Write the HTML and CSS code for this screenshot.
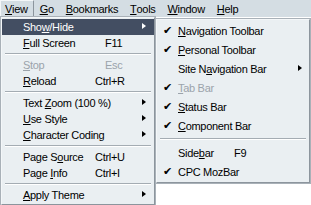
FILE: index.html
```html
<!DOCTYPE html>
<html>
<head>
<meta charset="utf-8">
<link rel="stylesheet" href="styles.css">
</head>
<body>
<div class="menubar">
  <span class="mb-item active"><u>V</u>iew</span>
  <span class="mb-item"><u>G</u>o</span>
  <span class="mb-item"><u>B</u>ookmarks</span>
  <span class="mb-item"><u>T</u>ools</span>
  <span class="mb-item"><u>W</u>indow</span>
  <span class="mb-item"><u>H</u>elp</span>
</div>
<div class="menus">
  <div class="menu menu-main">
    <div class="item hl"><span class="label">Sho<u>w</u>/Hide</span><span class="arrow"></span></div>
    <div class="item"><span class="label"><u>F</u>ull Screen</span><span class="accel short">F11</span></div>
    <div class="sep"></div>
    <div class="item disabled"><span class="label"><u>S</u>top</span><span class="accel short">Esc</span></div>
    <div class="item"><span class="label"><u>R</u>eload</span><span class="accel">Ctrl+R</span></div>
    <div class="sep"></div>
    <div class="item"><span class="label">Text <u>Z</u>oom (100 %)</span><span class="arrow"></span></div>
    <div class="item"><span class="label"><u>U</u>se Style</span><span class="arrow"></span></div>
    <div class="item"><span class="label"><u>C</u>haracter Coding</span><span class="arrow"></span></div>
    <div class="sep"></div>
    <div class="item"><span class="label">Page S<u>o</u>urce</span><span class="accel">Ctrl+U</span></div>
    <div class="item"><span class="label">Page <u>I</u>nfo</span><span class="accel">Ctrl+I</span></div>
    <div class="sep"></div>
    <div class="item"><span class="label"><u>A</u>pply Theme</span><span class="arrow"></span></div>
  </div>
  <div class="menu menu-sub">
    <div class="item"><span class="mark">✔</span><span class="label"><u>N</u>avigation Toolbar</span></div>
    <div class="item"><span class="mark">✔</span><span class="label"><u>P</u>ersonal Toolbar</span></div>
    <div class="item"><span class="mark"></span><span class="label">Site N<u>a</u>vigation Bar</span><span class="arrow"></span></div>
    <div class="item disabled"><span class="mark">✔</span><span class="label"><u>T</u>ab Bar</span></div>
    <div class="item"><span class="mark">✔</span><span class="label"><u>S</u>tatus Bar</span></div>
    <div class="item"><span class="mark">✔</span><span class="label"><u>C</u>omponent Bar</span></div>
    <div class="sep"></div>
    <div class="item"><span class="mark"></span><span class="label">Side<u>b</u>ar</span><span class="accel">F9</span></div>
    <div class="item"><span class="mark">✔</span><span class="label">CPC MozBar</span></div>
  </div>
</div>
</body>
</html>
```

FILE: styles.css
```css
html, body {
  margin: 0;
  padding: 0;
  background: #ffffff;
}
body {
  width: 311px;
  height: 205px;
  overflow: hidden;
  font-family: "Liberation Sans", Arial, sans-serif;
  font-size: 11px;
  letter-spacing: -0.3px;
  color: #000;
}
u { text-decoration: underline; text-underline-offset: 1px; }

.menubar {
  display: flex;
  height: 17px;
  background: #d4dde3;
  align-items: stretch;
  box-sizing: border-box;
}
.mb-item {
  display: flex;
  align-items: center;
  padding: 0 6px;
  box-sizing: border-box;
}
.mb-item.active {
  padding: 0 5px 0 4px;
  border: 1px solid;
  border-color: #f4f7f9 #8c959d #8c959d #f4f7f9;
}

.menus {
  display: flex;
  align-items: flex-start;
}
.menu {
  background: #eaeff2;
  border: 1px solid;
  border-color: #f4f7f9 #8c959d #8c959d #f4f7f9;
  box-shadow: 0 0 0 1px #a9b1b8;
  box-sizing: border-box;
  padding: 1px 0;
}
.menu-main {
  width: 154px;
  margin-left: 1px;
}
.menu-sub {
  width: 154px;
  margin-top: 2px;
  margin-left: 1px;
}
.item {
  display: flex;
  align-items: center;
  height: 16px;
  padding: 0 0 0 21px;
  position: relative;
  white-space: nowrap;
}
.item .label { flex: 0 0 auto; }
.menu-main .label { min-width: 72px; }
.item .accel.short { margin-left: 10px; }
.item .arrow {
  position: absolute;
  right: 8px;
  top: 50%;
  margin-top: -4px;
  width: 0;
  height: 0;
  border-top: 3.5px solid transparent;
  border-bottom: 3.5px solid transparent;
  border-left: 4px solid #000;
}
.item.hl {
  background: #434e62;
  color: #fff;
}
.item.hl .arrow { border-left-color: #fff; }
.item.disabled .label,
.item.disabled .accel { color: #9ba3ab; }
.sep {
  height: 0;
  border-top: 1px solid #a4acb3;
  border-bottom: 1px solid #ffffff;
  margin: 2px 3px;
}

.menu-sub .item { padding-left: 6px; height: 19px; }
.menu-sub .sep { margin: 3px 3px 3px; }
.menu-sub .mark {
  width: 15px;
  font-size: 11px;
  line-height: 1;
  color: #000;
}
.menu-sub .label { min-width: 56px; }
.menu-sub .item .arrow { right: 7px; }
```
